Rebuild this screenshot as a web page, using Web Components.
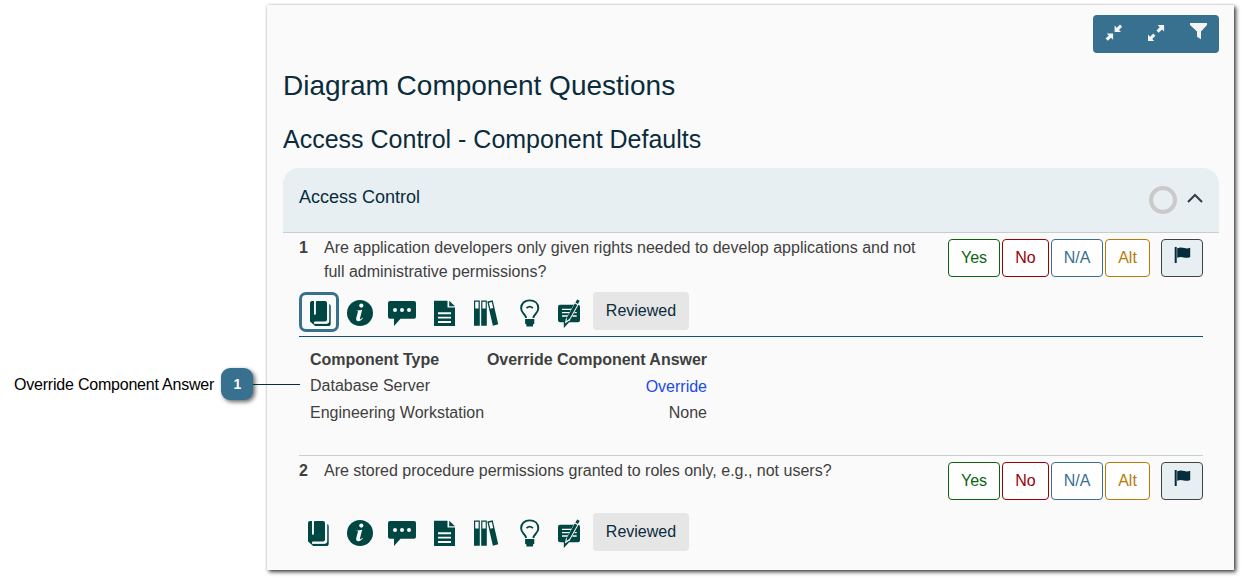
<!DOCTYPE html>
<html lang="en">
<head>
<meta charset="utf-8">
<title>Diagram Component Questions</title>
<style>
body { margin: 0; background: #fff; font-family: "Liberation Sans", Arial, sans-serif; font-size: 16px; color: #3f3f3f; }
</style>
</head>
<body>
<help-page>
  <help-callout slot="notes" number="1">Override Component Answer</help-callout>
  <question-panel>
    <panel-tools></panel-tools>
    <panel-title>Diagram Component Questions</panel-title>
    <panel-title level="2">Access Control - Component Defaults</panel-title>
    <category-header>Access Control</category-header>
    <question-item number="1" open>Are application developers only given rights needed to develop applications and not full administrative permissions?
      <override-table slot="detail"></override-table>
    </question-item>
    <question-item number="2">Are stored procedure permissions granted to roles only, e.g., not users?</question-item>
  </question-panel>
</help-page>
<script>
const define = (name, html) => customElements.define(name, class extends HTMLElement {
  constructor() {
    super();
    const markup = typeof html === 'function' ? html(this) : html;
    this.attachShadow({ mode: 'open' }).innerHTML = markup;
  }
});

define('help-page', `
<style>
:host { display: flex; height: 579px; overflow: hidden; }
.notes { width: 267px; flex: none; position: relative; z-index: 1; }
</style>
<div class="notes"><slot name="notes"></slot></div><slot></slot>`);

define('help-callout', el => `
<style>
:host { display: flex; align-items: center; margin-top: 368px; height: 32px; width: 300px; color: #000; }
.label { margin-left: 14px; width: 207px; flex: none; white-space: nowrap; letter-spacing: -0.21px; padding-top: 2px; }
.badge { width: 32px; height: 32px; flex: none; border-radius: 9px; background: #38708f; color: #fff; font-weight: bold; font-size: 14px; line-height: 32px; text-align: center; box-shadow: 2px 2px 4px rgba(0,0,0,.6); text-indent: 1px; }
.line { height: 1px; width: 47px; background: #0a2c3c; margin-top: 1px; }
</style>
<span class="label"><slot></slot></span><span class="badge">${el.getAttribute('number')}</span><span class="line"></span>`);

define('question-panel', `
<style>
:host { display: block; box-sizing: border-box; width: 967px; height: 565px; margin-top: 5px; padding: 10px 15px 0 16px; background: #fafafa; box-shadow: 2px 2px 4px rgba(0,0,0,.75), 0 0 2px rgba(0,0,0,.18); }
</style><slot></slot>`);

define('panel-tools', `
<style>
:host { display: flex; justify-content: flex-end; }
.bar { display: flex; border-radius: 4px; background: #38708f; overflow: hidden; }
.bar svg { display: block; width: 42px; height: 38px; fill: #f4f4f4; }
</style>
<div class="bar">
<svg viewBox="0 0 42 38"><path d="M21.6 10.6v6.4h6.4l-2-2 3.2-3.2-2.2-2.2-3.2 3.2zM20.1 18.5h-6.4l2 2-3.1 3.1 2.2 2.2 3.2-3.1 2.1 2.1z"/></svg>
<svg viewBox="0 0 42 38"><path d="M29.1 10v6.4l-2.1-2-3.3 3.3-2.2-2.2 3.2-3.3-2-2.200zM13 26v-6.400l2.100 2.100 3.200-3.200 2.100 2.200-3.200 3.200 2.100 2.100z"/></svg>
<svg viewBox="0 0 42 38"><path d="M13 8h17v2l-6 6.600v7.600l-4-2.500v-5.100L13 10z"/></svg>
</div>`);

define('panel-title', `
<style>
:host { display: block; color: #0a2c3c; font-size: 28px; line-height: 34px; margin-top: 16px; }
:host([level="2"]) { font-size: 25px; line-height: 30px; margin-top: 21px; margin-bottom: 14px; }
</style><slot></slot>`);

define('category-header', `
<style>
:host { display: flex; align-items: center; box-sizing: border-box; height: 65px; padding: 0 16px; background: #e7eff2; border-bottom: 1px solid #c8cccd; border-radius: 16px 16px 0 0; color: #0a2c3c; font-size: 18px; }
.name { flex: 1; padding-bottom: 7px; line-height: 20px; }
.ring { box-sizing: border-box; width: 28px; height: 28px; border: 4px solid #cacaca; border-radius: 50%; margin-right: 10px; }
svg { width: 16px; height: 10px; margin-bottom: 4px; }
</style>
<span class="name"><slot></slot></span><span class="ring"></span>
<svg viewBox="0 0 16 10" fill="none" stroke="#333d44" stroke-width="2"><path d="M1 9l7-7 7 7"/></svg>`);

define('answer-buttons', `
<style>
:host { display: flex; gap: 2px; flex: none; }
span { box-sizing: border-box; height: 38px; border: 1px solid; border-radius: 4px; background: #fff; text-align: center; line-height: 36px; }
.yes { width: 52px; color: #0b6410; } .no { width: 47px; color: #990008; }
.na { width: 52px; color: #38708f; } .alt { width: 45px; color: #b87a08; }
.flag { width: 42px; margin-left: 9px; background: #e7eff2; border-color: #3f4346; }
svg { display: block; width: 40px; height: 36px; fill: #062b3b; }
</style>
<span class="yes">Yes</span><span class="no">No</span><span class="na">N/A</span><span class="alt">Alt</span>
<span class="flag"><svg viewBox="0 0 40 36"><path d="M12.700 7h2v16h-2zM15.200 8.300c3-1.500 5.100-.8 7.200-.2 2 .6 3.800.5 5.800-.4v9.300c-2.400 1.100-4.200 1-6.400.4-2.100-.6-4.100-.8-6.600.3z"/></svg></span>`);

define('question-tools', `
<style>
:host { display: flex; height: 40px; color: #004642; }
svg { display: block; flex: none; height: 30px; margin-top: 6px; fill: currentColor; }
.book { box-sizing: border-box; width: 40px; height: 40px; flex: none; padding-left: 9px; }
:host([open]) .book { border: 3px solid #38708f; border-radius: 7px; padding-left: 8px; }
:host([open]) svg { margin-top: 7px; }
:host([open]) .book svg { margin-top: 4px; }
.rev { width: 96px; height: 38px; line-height: 38px; border-radius: 4px; background: #e6e6e6; color: #0a2c3c; text-align: center; margin-left: 12px; }
</style>
<span class="book"><svg width="21" viewBox="0 0 21 30"><path d="M2 2h2v13.600h1.600V3.600Q5.600 2 6.800 2H15q2 0 2 2v16.400q0 2-2 2H5.200q-1.200 0-1.200 1t1.200 1H17q1.300 0 1.300-1.300V4.800q2.400.2 2.400 2.300v17.400q0 2.600-2.600 2.600H5.200L0 22.500V4q0-2 2-2z"/><path d="M4.900 2v13.200" stroke="#fafafa" stroke-width="1.800"/><path d="M4 24h12.800q1.700 0 1.700-1.700V4.500" fill="none" stroke="#fafafa" stroke-width="1.500"/></svg></span>
<svg width="26" viewBox="0 0 26 30" style="margin-left:8px"><circle cx="13" cy="14" r="13"/><g fill="#fafafa"><circle cx="14.300" cy="6.600" r="2.100"/><path d="M9.400 11.700l5.800-1-2.200 8.500c-.4 1.500.5 1.500 2.200-.5l.7.600c-3 4.100-7.800 3.600-6.600-.6l1.500-5.500c.4-1.200-.1-1.300-1.400-1.200z"/></g></svg>
<svg width="28" viewBox="0 0 28 30" style="margin-left:15px"><path d="M2 2h24q2 0 2 2v13.800q0 2-2 2H12.500L6 27v-7.200H2q-2 0-2-2V4q0-2 2-2z"/><g fill="#fafafa"><circle cx="7" cy="11" r="2"/><circle cx="14" cy="11" r="2"/><circle cx="21" cy="11" r="2"/></g></svg>
<svg width="21" viewBox="0 0 21 30" style="margin-left:18px"><path d="M0 1.700h13.500v6.800H21V27H0zM15.200 1.700L21 7.200h-5.800z"/><path d="M4 14.200h13M4 18.600h13M4 23h13" stroke="#fafafa" stroke-width="1.900"/></svg>
<svg width="25" viewBox="0 0 25 30" style="margin-left:19px"><path fill-rule="evenodd" d="M0 1.500h5.800v25.200H0zm1.200 1.300v6.700h3.400V2.800zM7.200 1.500h5.600v25.200H7.200zm1.200 1.300v6.700h3.300V2.800zM13.300 2.600l5.400-1.300 5.500 24-5.300 1.400zm1.600 1.100l1.400 6 2.900-.8-1.400-5.900z"/></svg>
<svg width="20" viewBox="0 0 20 30" style="margin-left:21px"><path d="M6 19c0-3.800-4.900-4.500-4.900-9.700 0-5 3.600-7.900 8.600-7.900s8.600 2.900 8.600 7.900c0 5.200-4.900 5.900-4.900 9.700" fill="none" stroke="currentColor" stroke-width="1.900"/><path d="M5.100 20h9.200v4.700L13 25.500v2H6.400v-2l-1.300-.8z"/><path d="M6.500 9.200q3.200-3 6.400 0" fill="none" stroke="currentColor" stroke-width="1.700"/></svg>
<svg width="23" viewBox="0 0 23 30" style="margin-left:18px"><path d="M2 5.800h18q2 0 2 2v13.400q0 2-2 2h-8.800L5.800 29v-5.800H2q-2 0-2-2V7.800q0-2 2-2z"/><path d="M4 10.400h10M4 13.700h8M4 17h6M16.500 13.700h2.200M14.500 17h4.200" stroke="#fafafa" stroke-width="1.300"/><path d="M7.600 20.500L18 1.500l3.800 2-9.900 17.700-4.900 3.300z" fill="#fafafa"/><path d="M9 18.400L16.800 4.500l2.500 1.400-7.700 13.900-3.100 2.300zM17.400 3.500L19.200.4l2.500 1.400-1.800 3.100z"/></svg>
<span class="rev">Reviewed</span>`);

define('override-table', `
<style>
:host { display: grid; grid-template-columns: 176px 221px; grid-template-rows: 26px 27px 27px; line-height: 26px; padding: 10px 0 0 11px; height: 108px; box-sizing: border-box; white-space: nowrap; }
.r { text-align: right; } b { letter-spacing: -.03px; } .link { color: #2048ee; padding-top: 1px; }
</style>
<b>Component Type</b><b class="r">Override Component Answer</b>
<span>Database Server</span><span class="r link">Override</span>
<span>Engineering Workstation</span><span class="r">None</span>`);

define('question-item', el => {
  const open = el.hasAttribute('open');
  return `
<style>
:host { display: block; margin: 0 16px; }
.ask { display: flex; height: ${open ? 59 : 57}px; }
b { width: 25px; flex: none; line-height: 24px; padding-top: 3px; }
p { margin: 0; padding-top: 3px; line-height: 24px; width: 612px; margin-right: 12px; flex: none; }
answer-buttons { margin-top: 6px; }
.detail { border-top: 1px solid #0f5274; margin-top: 4px; border-bottom: 1px solid #c8cccd; padding-bottom: 10px; }
</style>
<div class="ask"><b>${el.getAttribute('number')}</b><p><slot></slot></p><answer-buttons></answer-buttons></div>
<question-tools ${open ? 'open' : ''}></question-tools>
${open ? '<div class="detail"><slot name="detail"></slot></div>' : ''}`;
});
</script>
</body>
</html>
